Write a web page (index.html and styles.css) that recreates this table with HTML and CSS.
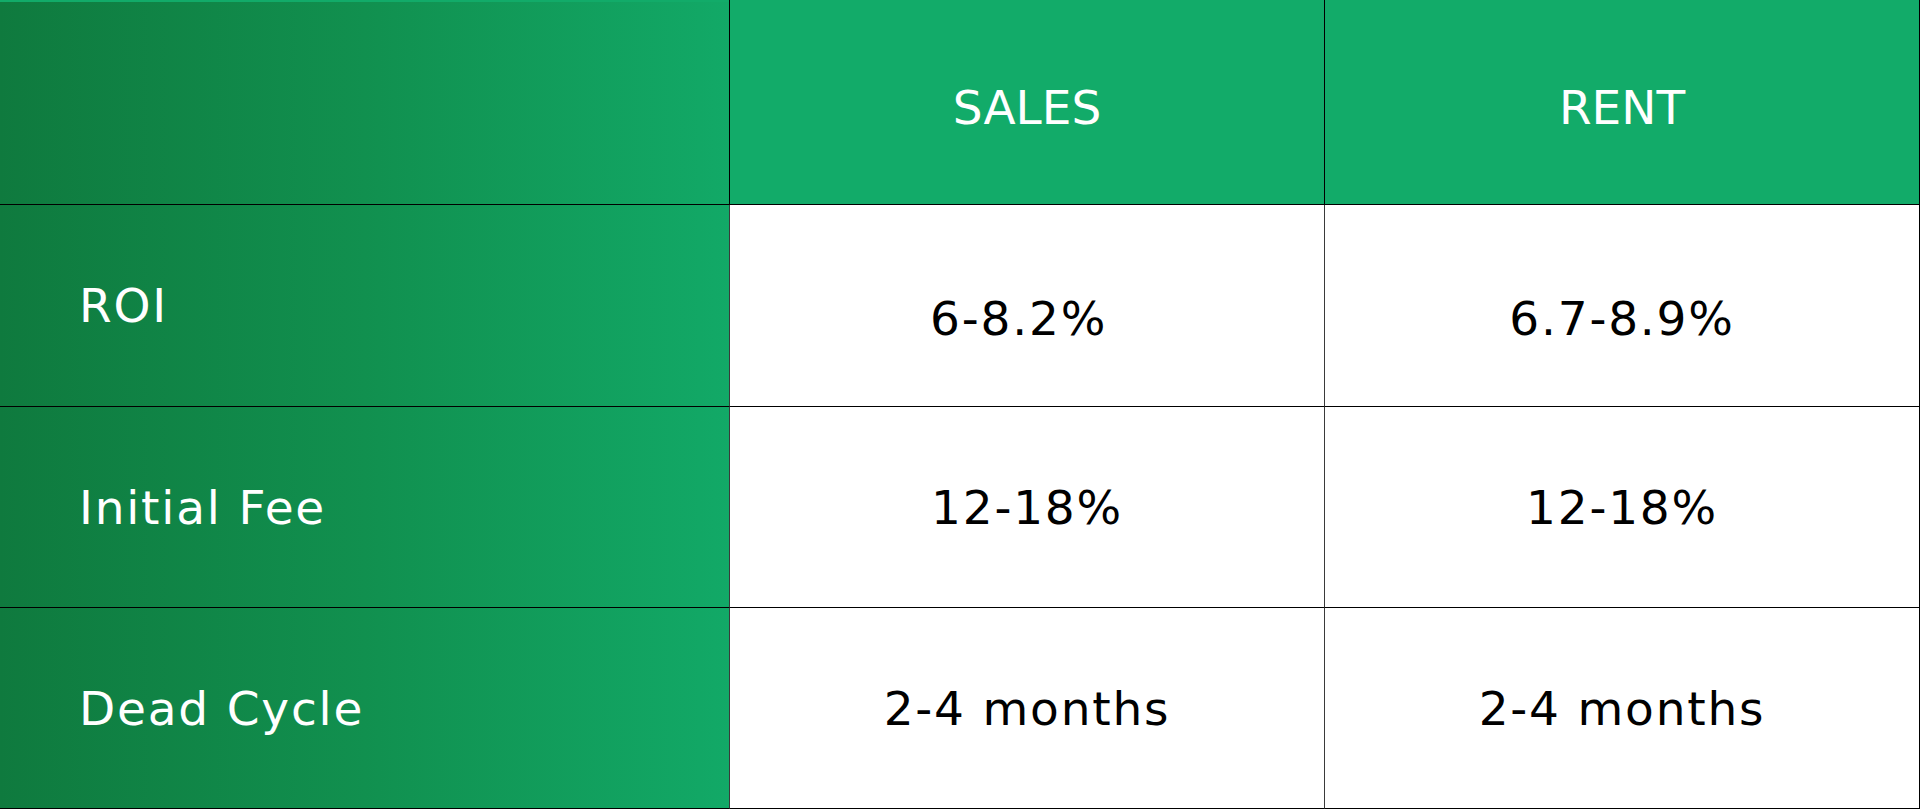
FILE: index.html
```html
<!DOCTYPE html>
<html lang="en">
<head>
<meta charset="utf-8">
<title>Sales vs Rent</title>
<link rel="stylesheet" href="styles.css">
</head>
<body>
<div class="grid">
  <div class="label head-label"></div>
  <div class="head">SALES</div>
  <div class="head last">RENT</div>

  <div class="label">ROI</div>
  <div class="val low">6-8.2%&nbsp;</div>
  <div class="val low last">6.7-8.9%</div>

  <div class="label">Initial Fee</div>
  <div class="val">12-18%</div>
  <div class="val last">12-18%</div>

  <div class="label">Dead Cycle</div>
  <div class="val">2-4 months</div>
  <div class="val last">2-4 months</div>
</div>
</body>
</html>
```
FILE: styles.css
```css
* { box-sizing: border-box; }
html, body { margin: 0; padding: 0; background: #ffffff; }
.grid {
  width: 1920px;
  display: grid;
  grid-template-columns: 729px 595px 596px;
  grid-template-rows: 205px 202px 201px 201px;
  font-family: "DejaVu Sans", "Liberation Sans", sans-serif;
  font-size: 47px;
  letter-spacing: 1.8px;
}
.grid > div {
  display: flex;
  align-items: center;
  border-bottom: 1px solid #000;
}
.label {
  background: linear-gradient(90deg, #0f7a3e 0%, #11904f 50%, #12a967 100%);
  color: #fff;
  font-weight: 400;
  padding-left: 79px;
}
.head-label { border-top: 2px solid #12ab69; }
.head {
  background: #12ab69;
  color: #fff;
  font-weight: 400;
  letter-spacing: 0;
  justify-content: center;
  border-left: 1px solid #000;
  padding-top: 10px;
}
.val {
  background: #fff;
  color: #000;
  font-weight: 400;
  justify-content: center;
  border-left: 1px solid #3a3a3a;
}
.val.low { padding-top: 26px; }
.last { border-right: 1px solid #000; }
```
